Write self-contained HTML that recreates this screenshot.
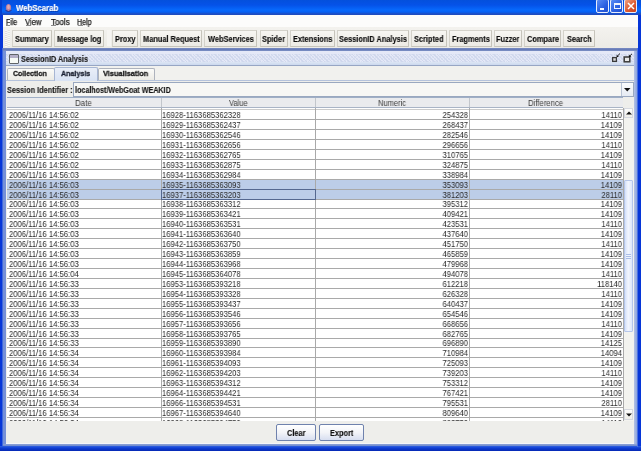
<!DOCTYPE html><html><head><meta charset="utf-8"><style>
*{box-sizing:border-box}
html,body{margin:0;padding:0;width:641px;height:451px;overflow:hidden;background:#0636d8;font-family:"Liberation Sans",sans-serif;}
.a{position:absolute}
.t{position:absolute;white-space:nowrap;line-height:10px;will-change:transform}
.b8{font-weight:bold;font-size:8px}
</style></head><body>
<div class="a" style="left:0;top:0;width:641px;height:15px;background:linear-gradient(#0450dc 0px,#0552e8 5px,#0769fc 10px,#0560f4 12px,#1e4cc0 14px,#1e4cc0 15px)"></div>
<div class="a" style="left:0;top:0;width:2px;height:15px;background:#0440d0"></div>
<svg class="a" style="left:4px;top:2px" width="9" height="10" viewBox="0 0 9 10"><ellipse cx="4.5" cy="5.5" rx="2.6" ry="3.6" fill="#b77ea0"/><ellipse cx="4.5" cy="5" rx="1.4" ry="2.2" fill="#e0a8b0"/><path d="M1.5 8.5 L4.5 9.5 L7.5 8.5" stroke="#3a2f7a" stroke-width="1" fill="none"/></svg>
<div class="t" style="left:16.00px;top:3px;font-weight:bold;font-size:9px;-webkit-text-stroke:0.2px #fff;text-shadow:0.7px 0.7px 0 #0a3aa8;color:#fff;transform-origin:0 0;transform:scaleX(0.8673)">WebScarab</div>
<div style="position:absolute;top:-1px;width:13px;height:14px;border:1px solid #e8eefc;border-radius:2px;left:596px;background:linear-gradient(135deg,#5a8ef5,#2a5fe0 60%,#1f4fd0)"><div class="a" style="left:2.5px;top:8px;width:4.5px;height:2px;background:#f4f8ff"></div></div>
<div style="position:absolute;top:-1px;width:13px;height:14px;border:1px solid #e8eefc;border-radius:2px;left:610px;background:linear-gradient(135deg,#5a8ef5,#2a5fe0 60%,#1f4fd0)"><div class="a" style="left:2.5px;top:3px;width:7px;height:6px;border:1px solid #eef4ff;border-top-width:2px"></div></div>
<div style="position:absolute;top:-1px;width:13px;height:14px;border:1px solid #e8eefc;border-radius:2px;left:624px;background:linear-gradient(135deg,#f0a080,#dc5a30 55%,#c84420)"><svg class="a" style="left:2px;top:2px" width="8" height="8"><path d="M1 1 L7 7 M7 1 L1 7" stroke="#fff" stroke-width="1.5"/></svg></div>
<div class="a" style="left:3px;top:15px;width:635px;height:12px;background:#fcfcfb"></div>
<div class="t" style="left:5.90px;top:17px;font-size:8.6px;-webkit-text-stroke:0.25px #222;color:#151515;transform-origin:0 0;transform:scaleX(0.8071)">File</div>
<div class="a" style="left:6.4px;top:25px;width:4px;height:1px;background:#8a8a8a"></div>
<div class="t" style="left:25.00px;top:17px;font-size:8.6px;-webkit-text-stroke:0.25px #222;color:#151515;transform-origin:0 0;transform:scaleX(0.8947)">View</div>
<div class="a" style="left:25.5px;top:25px;width:5px;height:1px;background:#8a8a8a"></div>
<div class="t" style="left:50.70px;top:17px;font-size:8.6px;-webkit-text-stroke:0.25px #222;color:#151515;transform-origin:0 0;transform:scaleX(0.9350)">Tools</div>
<div class="a" style="left:51.2px;top:25px;width:5px;height:1px;background:#8a8a8a"></div>
<div class="t" style="left:77.20px;top:17px;font-size:8.6px;-webkit-text-stroke:0.25px #222;color:#151515;transform-origin:0 0;transform:scaleX(0.8222)">Help</div>
<div class="a" style="left:77.7px;top:25px;width:5px;height:1px;background:#8a8a8a"></div>
<div class="a" style="left:3px;top:27px;width:635px;height:21px;background:linear-gradient(#f3f2ee,#ecebe6)"></div>
<div class="a" style="left:5px;top:30px;width:2px;height:17px;background:repeating-linear-gradient(#f8f6f8 0 1px,#e2dfe0 1px 2px)"></div>
<div class="a" style="left:8px;top:30px;width:2px;height:17px;background:repeating-linear-gradient(#e4e6e0 0 1px,#f8f8f6 1px 2px)"></div>
<div class="a" style="left:107px;top:30px;width:4px;height:16px;background:#f6f5f2"></div>
<div class="a" style="left:12px;top:30px;width:40px;height:17px;border:1px solid #d4d2ca;border-right-color:#c6c4bb;border-bottom-color:#c6c4bb;background:linear-gradient(#f7f6f2,#eceae4)"></div>
<div class="t" style="left:15.23px;top:34px;font-weight:bold;font-size:8.6px;-webkit-text-stroke:0.15px #222;color:#0c0c0c;transform-origin:0 0;transform:scaleX(0.8600)">Summary</div>
<div class="a" style="left:54px;top:30px;width:50px;height:17px;border:1px solid #d4d2ca;border-right-color:#c6c4bb;border-bottom-color:#c6c4bb;background:linear-gradient(#f7f6f2,#eceae4)"></div>
<div class="t" style="left:57.07px;top:34px;font-weight:bold;font-size:8.6px;-webkit-text-stroke:0.15px #222;color:#0c0c0c;transform-origin:0 0;transform:scaleX(0.8600)">Message log</div>
<div class="a" style="left:112px;top:30px;width:26px;height:17px;border:1px solid #d4d2ca;border-right-color:#c6c4bb;border-bottom-color:#c6c4bb;background:linear-gradient(#f7f6f2,#eceae4)"></div>
<div class="t" style="left:114.68px;top:34px;font-weight:bold;font-size:8.6px;-webkit-text-stroke:0.15px #222;color:#0c0c0c;transform-origin:0 0;transform:scaleX(0.8600)">Proxy</div>
<div class="a" style="left:140px;top:30px;width:62px;height:17px;border:1px solid #d4d2ca;border-right-color:#c6c4bb;border-bottom-color:#c6c4bb;background:linear-gradient(#f7f6f2,#eceae4)"></div>
<div class="t" style="left:142.62px;top:34px;font-weight:bold;font-size:8.6px;-webkit-text-stroke:0.15px #222;color:#0c0c0c;transform-origin:0 0;transform:scaleX(0.8600)">Manual Request</div>
<div class="a" style="left:204px;top:30px;width:53px;height:17px;border:1px solid #d4d2ca;border-right-color:#c6c4bb;border-bottom-color:#c6c4bb;background:linear-gradient(#f7f6f2,#eceae4)"></div>
<div class="t" style="left:207.71px;top:34px;font-weight:bold;font-size:8.6px;-webkit-text-stroke:0.15px #222;color:#0c0c0c;transform-origin:0 0;transform:scaleX(0.8600)">WebServices</div>
<div class="a" style="left:260px;top:30px;width:28px;height:17px;border:1px solid #d4d2ca;border-right-color:#c6c4bb;border-bottom-color:#c6c4bb;background:linear-gradient(#f7f6f2,#eceae4)"></div>
<div class="t" style="left:262.39px;top:34px;font-weight:bold;font-size:8.6px;-webkit-text-stroke:0.15px #222;color:#0c0c0c;transform-origin:0 0;transform:scaleX(0.8600)">Spider</div>
<div class="a" style="left:290px;top:30px;width:45px;height:17px;border:1px solid #d4d2ca;border-right-color:#c6c4bb;border-bottom-color:#c6c4bb;background:linear-gradient(#f7f6f2,#eceae4)"></div>
<div class="t" style="left:292.72px;top:34px;font-weight:bold;font-size:8.6px;-webkit-text-stroke:0.15px #222;color:#0c0c0c;transform-origin:0 0;transform:scaleX(0.8600)">Extensions</div>
<div class="a" style="left:337px;top:30px;width:72px;height:17px;border:1px solid #d4d2ca;border-right-color:#c6c4bb;border-bottom-color:#c6c4bb;background:linear-gradient(#f7f6f2,#eceae4)"></div>
<div class="t" style="left:339.03px;top:34px;font-weight:bold;font-size:8.6px;-webkit-text-stroke:0.15px #222;color:#0c0c0c;transform-origin:0 0;transform:scaleX(0.8600)">SessionID Analysis</div>
<div class="a" style="left:411px;top:30px;width:36px;height:17px;border:1px solid #d4d2ca;border-right-color:#c6c4bb;border-bottom-color:#c6c4bb;background:linear-gradient(#f7f6f2,#eceae4)"></div>
<div class="t" style="left:414.38px;top:34px;font-weight:bold;font-size:8.6px;-webkit-text-stroke:0.15px #222;color:#0c0c0c;transform-origin:0 0;transform:scaleX(0.8600)">Scripted</div>
<div class="a" style="left:449px;top:30px;width:43px;height:17px;border:1px solid #d4d2ca;border-right-color:#c6c4bb;border-bottom-color:#c6c4bb;background:linear-gradient(#f7f6f2,#eceae4)"></div>
<div class="t" style="left:451.58px;top:34px;font-weight:bold;font-size:8.6px;-webkit-text-stroke:0.15px #222;color:#0c0c0c;transform-origin:0 0;transform:scaleX(0.8600)">Fragments</div>
<div class="a" style="left:494px;top:30px;width:28px;height:17px;border:1px solid #d4d2ca;border-right-color:#c6c4bb;border-bottom-color:#c6c4bb;background:linear-gradient(#f7f6f2,#eceae4)"></div>
<div class="t" style="left:496.39px;top:34px;font-weight:bold;font-size:8.6px;-webkit-text-stroke:0.15px #222;color:#0c0c0c;transform-origin:0 0;transform:scaleX(0.8600)">Fuzzer</div>
<div class="a" style="left:524px;top:30px;width:37px;height:17px;border:1px solid #d4d2ca;border-right-color:#c6c4bb;border-bottom-color:#c6c4bb;background:linear-gradient(#f7f6f2,#eceae4)"></div>
<div class="t" style="left:526.59px;top:34px;font-weight:bold;font-size:8.6px;-webkit-text-stroke:0.15px #222;color:#0c0c0c;transform-origin:0 0;transform:scaleX(0.8600)">Compare</div>
<div class="a" style="left:563px;top:30px;width:32px;height:17px;border:1px solid #d4d2ca;border-right-color:#c6c4bb;border-bottom-color:#c6c4bb;background:linear-gradient(#f7f6f2,#eceae4)"></div>
<div class="t" style="left:566.53px;top:34px;font-weight:bold;font-size:8.6px;-webkit-text-stroke:0.15px #222;color:#0c0c0c;transform-origin:0 0;transform:scaleX(0.8600)">Search</div>
<div class="a" style="left:2px;top:48px;width:636px;height:399px;background:#7590d8"></div>
<div class="a" style="left:2px;top:48px;width:1px;height:399px;background:#4068dc"></div>
<div class="a" style="left:3px;top:48px;width:635px;height:3px;background:linear-gradient(#7a8cc2,#6479b6 60%,#8296c8)"></div>
<div class="a" style="left:6px;top:51px;width:628px;height:15px;background:#e4e8f7"></div>
<div class="a" style="left:6px;top:54px;width:628px;height:8px;opacity:0.6;background:repeating-linear-gradient(45deg,#c3cfe8 0 1px,transparent 1px 2.5px),repeating-linear-gradient(-45deg,#d3dcef 0 1px,transparent 1px 2.5px)"></div>
<div class="a" style="left:6px;top:62px;width:628px;height:3px;background:linear-gradient(#dde6f4,#cbd8ee)"></div>
<div class="a" style="left:6px;top:65px;width:628px;height:1px;background:#97a6c4"></div>
<div class="a" style="left:9px;top:54px;width:10px;height:10px;border:1px solid #606468;background:#f6faf6;border-radius:1px"></div>
<div class="a" style="left:10px;top:55px;width:8px;height:3px;background:#b4afc8"></div>
<div class="t" style="left:21.00px;top:54px;font-weight:bold;font-size:8.6px;-webkit-text-stroke:0.15px #222;color:#1a1a1a;transform-origin:0 0;transform:scaleX(0.8481)">SessionID Analysis</div>
<svg class="a" style="left:611px;top:52px" width="22" height="11"><rect x="1.6" y="5.6" width="3.8" height="3.8" fill="#d8d8d8" stroke="#3a3a3a" stroke-width="1.3"/><path d="M9 1.5 L6.3 4.2" stroke="#222" stroke-width="1"/><path d="M5.6 4.9 L5.6 2.6 L7.9 4.9 Z" fill="#111"/><rect x="13.2" y="5" width="5.6" height="4.8" fill="#e8e8e8" stroke="#3a3a3a" stroke-width="1.5"/><path d="M21 1.8 L18.6 4.2" stroke="#222" stroke-width="1"/><path d="M17.9 4.9 L17.9 2.6 L20.2 4.9 Z" fill="#111"/></svg>
<div class="a" style="left:6px;top:66px;width:628px;height:378px;background:#eeeeeb"></div>
<div class="a" style="left:6px;top:66px;width:628px;height:15px;background:#f1f1ee"></div>
<div class="a" style="left:6px;top:80px;width:628px;height:1px;background:#b4c2dc"></div>
<div class="a" style="left:7px;top:68px;width:48px;height:12px;border:1px solid #aeb3bd;border-bottom:none;border-radius:2px 2px 0 0;background:linear-gradient(#fbfbf9,#ecebe5)"></div>
<div class="t" style="left:13.10px;top:69px;font-weight:bold;font-size:8.1px;-webkit-text-stroke:0.3px #111;color:#1a1a1a;transform-origin:0 0;transform:scaleX(0.8641)">Collection</div>
<div class="a" style="left:98px;top:68px;width:57px;height:12px;border:1px solid #aeb3bd;border-bottom:none;border-radius:2px 2px 0 0;background:linear-gradient(#fbfbf9,#ecebe5)"></div>
<div class="t" style="left:102.90px;top:69px;font-weight:bold;font-size:8.1px;-webkit-text-stroke:0.3px #111;color:#1a1a1a;transform-origin:0 0;transform:scaleX(0.9080)">Visualisation</div>
<div class="a" style="left:54px;top:67px;width:44px;height:14px;border:1px solid #a7b6d3;border-bottom:none;border-radius:2px 2px 0 0;background:linear-gradient(#e9eef8,#d9e3f4)"></div>
<div class="t" style="left:60.80px;top:69px;font-weight:bold;font-size:8.1px;-webkit-text-stroke:0.3px #111;color:#1f2a4a;transform-origin:0 0;transform:scaleX(0.8788)">Analysis</div>
<div class="t" style="left:7.00px;top:85px;font-weight:bold;font-size:8.6px;-webkit-text-stroke:0.15px #222;color:#1a1a1a;transform-origin:0 0;transform:scaleX(0.8526)">Session Identifier :</div>
<div class="a" style="left:73px;top:82px;width:561px;height:15px;border:1px solid #9aa8c0;background:#f7f7f5"></div>
<div class="t" style="left:74.70px;top:85px;font-weight:bold;font-size:8.6px;-webkit-text-stroke:0.15px #222;color:#151515;transform-origin:0 0;transform:scaleX(0.8339)">localhost/WebGoat WEAKID</div>
<div class="a" style="left:621px;top:83px;width:12px;height:13px;background:linear-gradient(#fbfcfd,#e6ebf3);border-left:1px solid #b9c3d4"></div>
<svg class="a" style="left:624px;top:88px" width="7" height="4"><path d="M0 0 L6.5 0 L3.25 3.5 Z" fill="#111"/></svg>
<div class="a" style="left:7px;top:97px;width:616px;height:11px;background:#eaebee;border-top:1px solid #9fafc6;border-bottom:1px solid #a9b4c6"></div>
<div class="t" style="left:75.29px;top:98px;font-size:8.8px;color:#3a3a3a;transform-origin:0 0;transform:scaleX(0.9059)">Date</div>
<div class="a" style="left:161px;top:98px;width:1px;height:9px;background:#c2c6cc"></div>
<div class="t" style="left:229.40px;top:98px;font-size:8.8px;color:#3a3a3a;transform-origin:0 0;transform:scaleX(0.8500)">Value</div>
<div class="a" style="left:315px;top:98px;width:1px;height:9px;background:#c2c6cc"></div>
<div class="t" style="left:377.95px;top:98px;font-size:8.8px;color:#3a3a3a;transform-origin:0 0;transform:scaleX(0.8548)">Numeric</div>
<div class="a" style="left:469px;top:98px;width:1px;height:9px;background:#c2c6cc"></div>
<div class="t" style="left:528.02px;top:98px;font-size:8.8px;color:#3a3a3a;transform-origin:0 0;transform:scaleX(0.8795)">Difference</div>
<div class="a" style="left:623px;top:97px;width:11px;height:11px;background:#eeeeeb"></div>
<div class="a" style="left:7px;top:108px;width:616px;height:313px;background:#fff"></div>
<div class="a" style="left:7px;top:109px;width:616px;height:1px;background:#cbcbcb"></div>
<div class="t" style="left:8.6px;top:110px;transform-origin:0 0;font-size:9px;letter-spacing:0;color:#2a2a2a;transform:scaleX(0.85)">2006/11/16 14:56:02</div>
<div class="t" style="left:161.9px;top:110px;transform-origin:0 0;font-size:9px;letter-spacing:0;color:#2a2a2a;transform:scaleX(0.85)">16928-1163685362328</div>
<div class="t" style="left:268px;top:110px;width:200px;text-align:right;transform-origin:100% 0;font-size:9px;letter-spacing:0;color:#2a2a2a;transform:scaleX(0.85)">254328</div>
<div class="t" style="left:422px;top:110px;width:200px;text-align:right;transform-origin:100% 0;font-size:9px;letter-spacing:0;color:#2a2a2a;transform:scaleX(0.85)">14110</div>
<div class="a" style="left:7px;top:119px;width:616px;height:1px;background:#a9a9a9"></div>
<div class="t" style="left:8.6px;top:120px;transform-origin:0 0;font-size:9px;letter-spacing:0;color:#2a2a2a;transform:scaleX(0.85)">2006/11/16 14:56:02</div>
<div class="t" style="left:161.9px;top:120px;transform-origin:0 0;font-size:9px;letter-spacing:0;color:#2a2a2a;transform:scaleX(0.85)">16929-1163685362437</div>
<div class="t" style="left:268px;top:120px;width:200px;text-align:right;transform-origin:100% 0;font-size:9px;letter-spacing:0;color:#2a2a2a;transform:scaleX(0.85)">268437</div>
<div class="t" style="left:422px;top:120px;width:200px;text-align:right;transform-origin:100% 0;font-size:9px;letter-spacing:0;color:#2a2a2a;transform:scaleX(0.85)">14109</div>
<div class="a" style="left:7px;top:129px;width:616px;height:1px;background:#a9a9a9"></div>
<div class="t" style="left:8.6px;top:130px;transform-origin:0 0;font-size:9px;letter-spacing:0;color:#2a2a2a;transform:scaleX(0.85)">2006/11/16 14:56:02</div>
<div class="t" style="left:161.9px;top:130px;transform-origin:0 0;font-size:9px;letter-spacing:0;color:#2a2a2a;transform:scaleX(0.85)">16930-1163685362546</div>
<div class="t" style="left:268px;top:130px;width:200px;text-align:right;transform-origin:100% 0;font-size:9px;letter-spacing:0;color:#2a2a2a;transform:scaleX(0.85)">282546</div>
<div class="t" style="left:422px;top:130px;width:200px;text-align:right;transform-origin:100% 0;font-size:9px;letter-spacing:0;color:#2a2a2a;transform:scaleX(0.85)">14109</div>
<div class="a" style="left:7px;top:139px;width:616px;height:1px;background:#a9a9a9"></div>
<div class="t" style="left:8.6px;top:140px;transform-origin:0 0;font-size:9px;letter-spacing:0;color:#2a2a2a;transform:scaleX(0.85)">2006/11/16 14:56:02</div>
<div class="t" style="left:161.9px;top:140px;transform-origin:0 0;font-size:9px;letter-spacing:0;color:#2a2a2a;transform:scaleX(0.85)">16931-1163685362656</div>
<div class="t" style="left:268px;top:140px;width:200px;text-align:right;transform-origin:100% 0;font-size:9px;letter-spacing:0;color:#2a2a2a;transform:scaleX(0.85)">296656</div>
<div class="t" style="left:422px;top:140px;width:200px;text-align:right;transform-origin:100% 0;font-size:9px;letter-spacing:0;color:#2a2a2a;transform:scaleX(0.85)">14110</div>
<div class="a" style="left:7px;top:149px;width:616px;height:1px;background:#a9a9a9"></div>
<div class="t" style="left:8.6px;top:150px;transform-origin:0 0;font-size:9px;letter-spacing:0;color:#2a2a2a;transform:scaleX(0.85)">2006/11/16 14:56:02</div>
<div class="t" style="left:161.9px;top:150px;transform-origin:0 0;font-size:9px;letter-spacing:0;color:#2a2a2a;transform:scaleX(0.85)">16932-1163685362765</div>
<div class="t" style="left:268px;top:150px;width:200px;text-align:right;transform-origin:100% 0;font-size:9px;letter-spacing:0;color:#2a2a2a;transform:scaleX(0.85)">310765</div>
<div class="t" style="left:422px;top:150px;width:200px;text-align:right;transform-origin:100% 0;font-size:9px;letter-spacing:0;color:#2a2a2a;transform:scaleX(0.85)">14109</div>
<div class="a" style="left:7px;top:159px;width:616px;height:1px;background:#a9a9a9"></div>
<div class="t" style="left:8.6px;top:160px;transform-origin:0 0;font-size:9px;letter-spacing:0;color:#2a2a2a;transform:scaleX(0.85)">2006/11/16 14:56:02</div>
<div class="t" style="left:161.9px;top:160px;transform-origin:0 0;font-size:9px;letter-spacing:0;color:#2a2a2a;transform:scaleX(0.85)">16933-1163685362875</div>
<div class="t" style="left:268px;top:160px;width:200px;text-align:right;transform-origin:100% 0;font-size:9px;letter-spacing:0;color:#2a2a2a;transform:scaleX(0.85)">324875</div>
<div class="t" style="left:422px;top:160px;width:200px;text-align:right;transform-origin:100% 0;font-size:9px;letter-spacing:0;color:#2a2a2a;transform:scaleX(0.85)">14110</div>
<div class="a" style="left:7px;top:169px;width:616px;height:1px;background:#a9a9a9"></div>
<div class="t" style="left:8.6px;top:170px;transform-origin:0 0;font-size:9px;letter-spacing:0;color:#2a2a2a;transform:scaleX(0.85)">2006/11/16 14:56:03</div>
<div class="t" style="left:161.9px;top:170px;transform-origin:0 0;font-size:9px;letter-spacing:0;color:#2a2a2a;transform:scaleX(0.85)">16934-1163685362984</div>
<div class="t" style="left:268px;top:170px;width:200px;text-align:right;transform-origin:100% 0;font-size:9px;letter-spacing:0;color:#2a2a2a;transform:scaleX(0.85)">338984</div>
<div class="t" style="left:422px;top:170px;width:200px;text-align:right;transform-origin:100% 0;font-size:9px;letter-spacing:0;color:#2a2a2a;transform:scaleX(0.85)">14109</div>
<div class="a" style="left:7px;top:179px;width:616px;height:1px;background:#a9a9a9"></div>
<div class="a" style="left:7px;top:180px;width:616px;height:9px;background:#bccde8"></div>
<div class="t" style="left:8.6px;top:180px;transform-origin:0 0;font-size:9px;letter-spacing:0;color:#2a2a2a;transform:scaleX(0.85)">2006/11/16 14:56:03</div>
<div class="t" style="left:161.9px;top:180px;transform-origin:0 0;font-size:9px;letter-spacing:0;color:#2a2a2a;transform:scaleX(0.85)">16935-1163685363093</div>
<div class="t" style="left:268px;top:180px;width:200px;text-align:right;transform-origin:100% 0;font-size:9px;letter-spacing:0;color:#2a2a2a;transform:scaleX(0.85)">353093</div>
<div class="t" style="left:422px;top:180px;width:200px;text-align:right;transform-origin:100% 0;font-size:9px;letter-spacing:0;color:#2a2a2a;transform:scaleX(0.85)">14109</div>
<div class="a" style="left:7px;top:189px;width:616px;height:1px;background:#a9a9a9"></div>
<div class="a" style="left:7px;top:190px;width:616px;height:9px;background:#bccde8"></div>
<div class="t" style="left:8.6px;top:190px;transform-origin:0 0;font-size:9px;letter-spacing:0;color:#2a2a2a;transform:scaleX(0.85)">2006/11/16 14:56:03</div>
<div class="t" style="left:161.9px;top:190px;transform-origin:0 0;font-size:9px;letter-spacing:0;color:#2a2a2a;transform:scaleX(0.85)">16937-1163685363203</div>
<div class="t" style="left:268px;top:190px;width:200px;text-align:right;transform-origin:100% 0;font-size:9px;letter-spacing:0;color:#2a2a2a;transform:scaleX(0.85)">381203</div>
<div class="t" style="left:422px;top:190px;width:200px;text-align:right;transform-origin:100% 0;font-size:9px;letter-spacing:0;color:#2a2a2a;transform:scaleX(0.85)">28110</div>
<div class="a" style="left:7px;top:199px;width:616px;height:1px;background:#a9a9a9"></div>
<div class="t" style="left:8.6px;top:199px;transform-origin:0 0;font-size:9px;letter-spacing:0;color:#2a2a2a;transform:scaleX(0.85)">2006/11/16 14:56:03</div>
<div class="t" style="left:161.9px;top:199px;transform-origin:0 0;font-size:9px;letter-spacing:0;color:#2a2a2a;transform:scaleX(0.85)">16938-1163685363312</div>
<div class="t" style="left:268px;top:199px;width:200px;text-align:right;transform-origin:100% 0;font-size:9px;letter-spacing:0;color:#2a2a2a;transform:scaleX(0.85)">395312</div>
<div class="t" style="left:422px;top:199px;width:200px;text-align:right;transform-origin:100% 0;font-size:9px;letter-spacing:0;color:#2a2a2a;transform:scaleX(0.85)">14109</div>
<div class="a" style="left:7px;top:208px;width:616px;height:1px;background:#a9a9a9"></div>
<div class="t" style="left:8.6px;top:209px;transform-origin:0 0;font-size:9px;letter-spacing:0;color:#2a2a2a;transform:scaleX(0.85)">2006/11/16 14:56:03</div>
<div class="t" style="left:161.9px;top:209px;transform-origin:0 0;font-size:9px;letter-spacing:0;color:#2a2a2a;transform:scaleX(0.85)">16939-1163685363421</div>
<div class="t" style="left:268px;top:209px;width:200px;text-align:right;transform-origin:100% 0;font-size:9px;letter-spacing:0;color:#2a2a2a;transform:scaleX(0.85)">409421</div>
<div class="t" style="left:422px;top:209px;width:200px;text-align:right;transform-origin:100% 0;font-size:9px;letter-spacing:0;color:#2a2a2a;transform:scaleX(0.85)">14109</div>
<div class="a" style="left:7px;top:218px;width:616px;height:1px;background:#a9a9a9"></div>
<div class="t" style="left:8.6px;top:219px;transform-origin:0 0;font-size:9px;letter-spacing:0;color:#2a2a2a;transform:scaleX(0.85)">2006/11/16 14:56:03</div>
<div class="t" style="left:161.9px;top:219px;transform-origin:0 0;font-size:9px;letter-spacing:0;color:#2a2a2a;transform:scaleX(0.85)">16940-1163685363531</div>
<div class="t" style="left:268px;top:219px;width:200px;text-align:right;transform-origin:100% 0;font-size:9px;letter-spacing:0;color:#2a2a2a;transform:scaleX(0.85)">423531</div>
<div class="t" style="left:422px;top:219px;width:200px;text-align:right;transform-origin:100% 0;font-size:9px;letter-spacing:0;color:#2a2a2a;transform:scaleX(0.85)">14110</div>
<div class="a" style="left:7px;top:228px;width:616px;height:1px;background:#a9a9a9"></div>
<div class="t" style="left:8.6px;top:229px;transform-origin:0 0;font-size:9px;letter-spacing:0;color:#2a2a2a;transform:scaleX(0.85)">2006/11/16 14:56:03</div>
<div class="t" style="left:161.9px;top:229px;transform-origin:0 0;font-size:9px;letter-spacing:0;color:#2a2a2a;transform:scaleX(0.85)">16941-1163685363640</div>
<div class="t" style="left:268px;top:229px;width:200px;text-align:right;transform-origin:100% 0;font-size:9px;letter-spacing:0;color:#2a2a2a;transform:scaleX(0.85)">437640</div>
<div class="t" style="left:422px;top:229px;width:200px;text-align:right;transform-origin:100% 0;font-size:9px;letter-spacing:0;color:#2a2a2a;transform:scaleX(0.85)">14109</div>
<div class="a" style="left:7px;top:238px;width:616px;height:1px;background:#a9a9a9"></div>
<div class="t" style="left:8.6px;top:239px;transform-origin:0 0;font-size:9px;letter-spacing:0;color:#2a2a2a;transform:scaleX(0.85)">2006/11/16 14:56:03</div>
<div class="t" style="left:161.9px;top:239px;transform-origin:0 0;font-size:9px;letter-spacing:0;color:#2a2a2a;transform:scaleX(0.85)">16942-1163685363750</div>
<div class="t" style="left:268px;top:239px;width:200px;text-align:right;transform-origin:100% 0;font-size:9px;letter-spacing:0;color:#2a2a2a;transform:scaleX(0.85)">451750</div>
<div class="t" style="left:422px;top:239px;width:200px;text-align:right;transform-origin:100% 0;font-size:9px;letter-spacing:0;color:#2a2a2a;transform:scaleX(0.85)">14110</div>
<div class="a" style="left:7px;top:248px;width:616px;height:1px;background:#a9a9a9"></div>
<div class="t" style="left:8.6px;top:249px;transform-origin:0 0;font-size:9px;letter-spacing:0;color:#2a2a2a;transform:scaleX(0.85)">2006/11/16 14:56:03</div>
<div class="t" style="left:161.9px;top:249px;transform-origin:0 0;font-size:9px;letter-spacing:0;color:#2a2a2a;transform:scaleX(0.85)">16943-1163685363859</div>
<div class="t" style="left:268px;top:249px;width:200px;text-align:right;transform-origin:100% 0;font-size:9px;letter-spacing:0;color:#2a2a2a;transform:scaleX(0.85)">465859</div>
<div class="t" style="left:422px;top:249px;width:200px;text-align:right;transform-origin:100% 0;font-size:9px;letter-spacing:0;color:#2a2a2a;transform:scaleX(0.85)">14109</div>
<div class="a" style="left:7px;top:258px;width:616px;height:1px;background:#a9a9a9"></div>
<div class="t" style="left:8.6px;top:259px;transform-origin:0 0;font-size:9px;letter-spacing:0;color:#2a2a2a;transform:scaleX(0.85)">2006/11/16 14:56:03</div>
<div class="t" style="left:161.9px;top:259px;transform-origin:0 0;font-size:9px;letter-spacing:0;color:#2a2a2a;transform:scaleX(0.85)">16944-1163685363968</div>
<div class="t" style="left:268px;top:259px;width:200px;text-align:right;transform-origin:100% 0;font-size:9px;letter-spacing:0;color:#2a2a2a;transform:scaleX(0.85)">479968</div>
<div class="t" style="left:422px;top:259px;width:200px;text-align:right;transform-origin:100% 0;font-size:9px;letter-spacing:0;color:#2a2a2a;transform:scaleX(0.85)">14109</div>
<div class="a" style="left:7px;top:268px;width:616px;height:1px;background:#a9a9a9"></div>
<div class="t" style="left:8.6px;top:269px;transform-origin:0 0;font-size:9px;letter-spacing:0;color:#2a2a2a;transform:scaleX(0.85)">2006/11/16 14:56:04</div>
<div class="t" style="left:161.9px;top:269px;transform-origin:0 0;font-size:9px;letter-spacing:0;color:#2a2a2a;transform:scaleX(0.85)">16945-1163685364078</div>
<div class="t" style="left:268px;top:269px;width:200px;text-align:right;transform-origin:100% 0;font-size:9px;letter-spacing:0;color:#2a2a2a;transform:scaleX(0.85)">494078</div>
<div class="t" style="left:422px;top:269px;width:200px;text-align:right;transform-origin:100% 0;font-size:9px;letter-spacing:0;color:#2a2a2a;transform:scaleX(0.85)">14110</div>
<div class="a" style="left:7px;top:278px;width:616px;height:1px;background:#a9a9a9"></div>
<div class="t" style="left:8.6px;top:279px;transform-origin:0 0;font-size:9px;letter-spacing:0;color:#2a2a2a;transform:scaleX(0.85)">2006/11/16 14:56:33</div>
<div class="t" style="left:161.9px;top:279px;transform-origin:0 0;font-size:9px;letter-spacing:0;color:#2a2a2a;transform:scaleX(0.85)">16953-1163685393218</div>
<div class="t" style="left:268px;top:279px;width:200px;text-align:right;transform-origin:100% 0;font-size:9px;letter-spacing:0;color:#2a2a2a;transform:scaleX(0.85)">612218</div>
<div class="t" style="left:422px;top:279px;width:200px;text-align:right;transform-origin:100% 0;font-size:9px;letter-spacing:0;color:#2a2a2a;transform:scaleX(0.85)">118140</div>
<div class="a" style="left:7px;top:288px;width:616px;height:1px;background:#a9a9a9"></div>
<div class="t" style="left:8.6px;top:289px;transform-origin:0 0;font-size:9px;letter-spacing:0;color:#2a2a2a;transform:scaleX(0.85)">2006/11/16 14:56:33</div>
<div class="t" style="left:161.9px;top:289px;transform-origin:0 0;font-size:9px;letter-spacing:0;color:#2a2a2a;transform:scaleX(0.85)">16954-1163685393328</div>
<div class="t" style="left:268px;top:289px;width:200px;text-align:right;transform-origin:100% 0;font-size:9px;letter-spacing:0;color:#2a2a2a;transform:scaleX(0.85)">626328</div>
<div class="t" style="left:422px;top:289px;width:200px;text-align:right;transform-origin:100% 0;font-size:9px;letter-spacing:0;color:#2a2a2a;transform:scaleX(0.85)">14110</div>
<div class="a" style="left:7px;top:298px;width:616px;height:1px;background:#a9a9a9"></div>
<div class="t" style="left:8.6px;top:299px;transform-origin:0 0;font-size:9px;letter-spacing:0;color:#2a2a2a;transform:scaleX(0.85)">2006/11/16 14:56:33</div>
<div class="t" style="left:161.9px;top:299px;transform-origin:0 0;font-size:9px;letter-spacing:0;color:#2a2a2a;transform:scaleX(0.85)">16955-1163685393437</div>
<div class="t" style="left:268px;top:299px;width:200px;text-align:right;transform-origin:100% 0;font-size:9px;letter-spacing:0;color:#2a2a2a;transform:scaleX(0.85)">640437</div>
<div class="t" style="left:422px;top:299px;width:200px;text-align:right;transform-origin:100% 0;font-size:9px;letter-spacing:0;color:#2a2a2a;transform:scaleX(0.85)">14109</div>
<div class="a" style="left:7px;top:308px;width:616px;height:1px;background:#a9a9a9"></div>
<div class="t" style="left:8.6px;top:309px;transform-origin:0 0;font-size:9px;letter-spacing:0;color:#2a2a2a;transform:scaleX(0.85)">2006/11/16 14:56:33</div>
<div class="t" style="left:161.9px;top:309px;transform-origin:0 0;font-size:9px;letter-spacing:0;color:#2a2a2a;transform:scaleX(0.85)">16956-1163685393546</div>
<div class="t" style="left:268px;top:309px;width:200px;text-align:right;transform-origin:100% 0;font-size:9px;letter-spacing:0;color:#2a2a2a;transform:scaleX(0.85)">654546</div>
<div class="t" style="left:422px;top:309px;width:200px;text-align:right;transform-origin:100% 0;font-size:9px;letter-spacing:0;color:#2a2a2a;transform:scaleX(0.85)">14109</div>
<div class="a" style="left:7px;top:318px;width:616px;height:1px;background:#a9a9a9"></div>
<div class="t" style="left:8.6px;top:319px;transform-origin:0 0;font-size:9px;letter-spacing:0;color:#2a2a2a;transform:scaleX(0.85)">2006/11/16 14:56:33</div>
<div class="t" style="left:161.9px;top:319px;transform-origin:0 0;font-size:9px;letter-spacing:0;color:#2a2a2a;transform:scaleX(0.85)">16957-1163685393656</div>
<div class="t" style="left:268px;top:319px;width:200px;text-align:right;transform-origin:100% 0;font-size:9px;letter-spacing:0;color:#2a2a2a;transform:scaleX(0.85)">668656</div>
<div class="t" style="left:422px;top:319px;width:200px;text-align:right;transform-origin:100% 0;font-size:9px;letter-spacing:0;color:#2a2a2a;transform:scaleX(0.85)">14110</div>
<div class="a" style="left:7px;top:328px;width:616px;height:1px;background:#a9a9a9"></div>
<div class="t" style="left:8.6px;top:329px;transform-origin:0 0;font-size:9px;letter-spacing:0;color:#2a2a2a;transform:scaleX(0.85)">2006/11/16 14:56:33</div>
<div class="t" style="left:161.9px;top:329px;transform-origin:0 0;font-size:9px;letter-spacing:0;color:#2a2a2a;transform:scaleX(0.85)">16958-1163685393765</div>
<div class="t" style="left:268px;top:329px;width:200px;text-align:right;transform-origin:100% 0;font-size:9px;letter-spacing:0;color:#2a2a2a;transform:scaleX(0.85)">682765</div>
<div class="t" style="left:422px;top:329px;width:200px;text-align:right;transform-origin:100% 0;font-size:9px;letter-spacing:0;color:#2a2a2a;transform:scaleX(0.85)">14109</div>
<div class="a" style="left:7px;top:338px;width:616px;height:1px;background:#a9a9a9"></div>
<div class="t" style="left:8.6px;top:338px;transform-origin:0 0;font-size:9px;letter-spacing:0;color:#2a2a2a;transform:scaleX(0.85)">2006/11/16 14:56:33</div>
<div class="t" style="left:161.9px;top:338px;transform-origin:0 0;font-size:9px;letter-spacing:0;color:#2a2a2a;transform:scaleX(0.85)">16959-1163685393890</div>
<div class="t" style="left:268px;top:338px;width:200px;text-align:right;transform-origin:100% 0;font-size:9px;letter-spacing:0;color:#2a2a2a;transform:scaleX(0.85)">696890</div>
<div class="t" style="left:422px;top:338px;width:200px;text-align:right;transform-origin:100% 0;font-size:9px;letter-spacing:0;color:#2a2a2a;transform:scaleX(0.85)">14125</div>
<div class="a" style="left:7px;top:347px;width:616px;height:1px;background:#a9a9a9"></div>
<div class="t" style="left:8.6px;top:348px;transform-origin:0 0;font-size:9px;letter-spacing:0;color:#2a2a2a;transform:scaleX(0.85)">2006/11/16 14:56:34</div>
<div class="t" style="left:161.9px;top:348px;transform-origin:0 0;font-size:9px;letter-spacing:0;color:#2a2a2a;transform:scaleX(0.85)">16960-1163685393984</div>
<div class="t" style="left:268px;top:348px;width:200px;text-align:right;transform-origin:100% 0;font-size:9px;letter-spacing:0;color:#2a2a2a;transform:scaleX(0.85)">710984</div>
<div class="t" style="left:422px;top:348px;width:200px;text-align:right;transform-origin:100% 0;font-size:9px;letter-spacing:0;color:#2a2a2a;transform:scaleX(0.85)">14094</div>
<div class="a" style="left:7px;top:357px;width:616px;height:1px;background:#a9a9a9"></div>
<div class="t" style="left:8.6px;top:358px;transform-origin:0 0;font-size:9px;letter-spacing:0;color:#2a2a2a;transform:scaleX(0.85)">2006/11/16 14:56:34</div>
<div class="t" style="left:161.9px;top:358px;transform-origin:0 0;font-size:9px;letter-spacing:0;color:#2a2a2a;transform:scaleX(0.85)">16961-1163685394093</div>
<div class="t" style="left:268px;top:358px;width:200px;text-align:right;transform-origin:100% 0;font-size:9px;letter-spacing:0;color:#2a2a2a;transform:scaleX(0.85)">725093</div>
<div class="t" style="left:422px;top:358px;width:200px;text-align:right;transform-origin:100% 0;font-size:9px;letter-spacing:0;color:#2a2a2a;transform:scaleX(0.85)">14109</div>
<div class="a" style="left:7px;top:367px;width:616px;height:1px;background:#a9a9a9"></div>
<div class="t" style="left:8.6px;top:368px;transform-origin:0 0;font-size:9px;letter-spacing:0;color:#2a2a2a;transform:scaleX(0.85)">2006/11/16 14:56:34</div>
<div class="t" style="left:161.9px;top:368px;transform-origin:0 0;font-size:9px;letter-spacing:0;color:#2a2a2a;transform:scaleX(0.85)">16962-1163685394203</div>
<div class="t" style="left:268px;top:368px;width:200px;text-align:right;transform-origin:100% 0;font-size:9px;letter-spacing:0;color:#2a2a2a;transform:scaleX(0.85)">739203</div>
<div class="t" style="left:422px;top:368px;width:200px;text-align:right;transform-origin:100% 0;font-size:9px;letter-spacing:0;color:#2a2a2a;transform:scaleX(0.85)">14110</div>
<div class="a" style="left:7px;top:377px;width:616px;height:1px;background:#a9a9a9"></div>
<div class="t" style="left:8.6px;top:378px;transform-origin:0 0;font-size:9px;letter-spacing:0;color:#2a2a2a;transform:scaleX(0.85)">2006/11/16 14:56:34</div>
<div class="t" style="left:161.9px;top:378px;transform-origin:0 0;font-size:9px;letter-spacing:0;color:#2a2a2a;transform:scaleX(0.85)">16963-1163685394312</div>
<div class="t" style="left:268px;top:378px;width:200px;text-align:right;transform-origin:100% 0;font-size:9px;letter-spacing:0;color:#2a2a2a;transform:scaleX(0.85)">753312</div>
<div class="t" style="left:422px;top:378px;width:200px;text-align:right;transform-origin:100% 0;font-size:9px;letter-spacing:0;color:#2a2a2a;transform:scaleX(0.85)">14109</div>
<div class="a" style="left:7px;top:387px;width:616px;height:1px;background:#a9a9a9"></div>
<div class="t" style="left:8.6px;top:388px;transform-origin:0 0;font-size:9px;letter-spacing:0;color:#2a2a2a;transform:scaleX(0.85)">2006/11/16 14:56:34</div>
<div class="t" style="left:161.9px;top:388px;transform-origin:0 0;font-size:9px;letter-spacing:0;color:#2a2a2a;transform:scaleX(0.85)">16964-1163685394421</div>
<div class="t" style="left:268px;top:388px;width:200px;text-align:right;transform-origin:100% 0;font-size:9px;letter-spacing:0;color:#2a2a2a;transform:scaleX(0.85)">767421</div>
<div class="t" style="left:422px;top:388px;width:200px;text-align:right;transform-origin:100% 0;font-size:9px;letter-spacing:0;color:#2a2a2a;transform:scaleX(0.85)">14109</div>
<div class="a" style="left:7px;top:397px;width:616px;height:1px;background:#a9a9a9"></div>
<div class="t" style="left:8.6px;top:398px;transform-origin:0 0;font-size:9px;letter-spacing:0;color:#2a2a2a;transform:scaleX(0.85)">2006/11/16 14:56:34</div>
<div class="t" style="left:161.9px;top:398px;transform-origin:0 0;font-size:9px;letter-spacing:0;color:#2a2a2a;transform:scaleX(0.85)">16966-1163685394531</div>
<div class="t" style="left:268px;top:398px;width:200px;text-align:right;transform-origin:100% 0;font-size:9px;letter-spacing:0;color:#2a2a2a;transform:scaleX(0.85)">795531</div>
<div class="t" style="left:422px;top:398px;width:200px;text-align:right;transform-origin:100% 0;font-size:9px;letter-spacing:0;color:#2a2a2a;transform:scaleX(0.85)">28110</div>
<div class="a" style="left:7px;top:407px;width:616px;height:1px;background:#a9a9a9"></div>
<div class="t" style="left:8.6px;top:408px;transform-origin:0 0;font-size:9px;letter-spacing:0;color:#2a2a2a;transform:scaleX(0.85)">2006/11/16 14:56:34</div>
<div class="t" style="left:161.9px;top:408px;transform-origin:0 0;font-size:9px;letter-spacing:0;color:#2a2a2a;transform:scaleX(0.85)">16967-1163685394640</div>
<div class="t" style="left:268px;top:408px;width:200px;text-align:right;transform-origin:100% 0;font-size:9px;letter-spacing:0;color:#2a2a2a;transform:scaleX(0.85)">809640</div>
<div class="t" style="left:422px;top:408px;width:200px;text-align:right;transform-origin:100% 0;font-size:9px;letter-spacing:0;color:#2a2a2a;transform:scaleX(0.85)">14109</div>
<div class="a" style="left:7px;top:417px;width:616px;height:1px;background:#a9a9a9"></div>
<div class="t" style="left:8.6px;top:418px;transform-origin:0 0;font-size:9px;letter-spacing:0;color:#2a2a2a;transform:scaleX(0.85)">2006/11/16 14:56:34</div>
<div class="t" style="left:161.9px;top:418px;transform-origin:0 0;font-size:9px;letter-spacing:0;color:#2a2a2a;transform:scaleX(0.85)">16968-1163685394750</div>
<div class="t" style="left:268px;top:418px;width:200px;text-align:right;transform-origin:100% 0;font-size:9px;letter-spacing:0;color:#2a2a2a;transform:scaleX(0.85)">823750</div>
<div class="t" style="left:422px;top:418px;width:200px;text-align:right;transform-origin:100% 0;font-size:9px;letter-spacing:0;color:#2a2a2a;transform:scaleX(0.85)">14110</div>
<div class="a" style="left:161px;top:108px;width:1px;height:313px;background:#a9a9a9"></div>
<div class="a" style="left:315px;top:108px;width:1px;height:313px;background:#a9a9a9"></div>
<div class="a" style="left:469px;top:108px;width:1px;height:313px;background:#a9a9a9"></div>
<div class="a" style="left:623px;top:108px;width:1px;height:313px;background:#a9a9a9"></div>
<div class="a" style="left:161px;top:189px;width:155px;height:11px;border:1px solid #55688f"></div>
<div class="a" style="left:6px;top:421px;width:628px;height:23px;background:#eeeeeb"></div>
<div class="a" style="left:624px;top:108px;width:10px;height:313px;background:#f3f3ef"></div>
<div class="a" style="left:624px;top:108px;width:9px;height:10px;border:1px solid #d6d9e0;background:linear-gradient(#fdfdfc,#efeee9)"></div>
<svg class="a" style="left:625.5px;top:111px" width="6" height="4"><path d="M0 3.5 L6 3.5 L3 0.5 Z" fill="#111"/></svg>
<div class="a" style="left:624px;top:180px;width:9px;height:152px;border:1px solid #b5c6ea;border-radius:1px;background:linear-gradient(90deg,#d3e0fa,#f3f6fe 45%,#dde7fb)"></div>
<div class="a" style="left:626px;top:254px;width:5px;height:5px;background:repeating-linear-gradient(#aabde6 0 1px,#eef3fd 1px 2px)"></div>
<div class="a" style="left:624px;top:409px;width:9px;height:11px;border:1px solid #d6d9e0;background:linear-gradient(#fdfdfc,#efeee9)"></div>
<svg class="a" style="left:625.5px;top:413px" width="6" height="4"><path d="M0 0.5 L6 0.5 L3 3.5 Z" fill="#111"/></svg>
<div class="a" style="left:276px;top:424px;width:40px;height:17px;border:1px solid #6f82ad;border-radius:2px;background:linear-gradient(#ffffff,#f3f4f8 50%,#d7def0)"></div>
<div class="t" style="left:286.54px;top:428px;font-weight:bold;font-size:8.6px;-webkit-text-stroke:0.15px #222;color:#111;transform-origin:0 0;transform:scaleX(0.8600)">Clear</div>
<div class="a" style="left:319px;top:424px;width:45px;height:17px;border:1px solid #6f82ad;border-radius:2px;background:linear-gradient(#ffffff,#f3f4f8 50%,#d7def0)"></div>
<div class="t" style="left:329.89px;top:428px;font-weight:bold;font-size:8.6px;-webkit-text-stroke:0.15px #222;color:#111;transform-origin:0 0;transform:scaleX(0.8600)">Export</div>
<div class="a" style="left:6px;top:443px;width:628px;height:1px;background:#f5f5f8"></div>
<div class="a" style="left:3px;top:444px;width:635px;height:2px;background:linear-gradient(#8ea4d8,#6d88cc)"></div>
<div class="a" style="left:0;top:446px;width:641px;height:5px;background:linear-gradient(#3060e0,#0e3ed4 40%,#0628b4)"></div>
<div class="a" style="left:634px;top:51px;width:3px;height:393px;background:linear-gradient(90deg,#b4c3e6,#8ba2dc)"></div>
<div class="a" style="left:637px;top:48px;width:1px;height:399px;background:#4a70e0"></div>
</body></html>
